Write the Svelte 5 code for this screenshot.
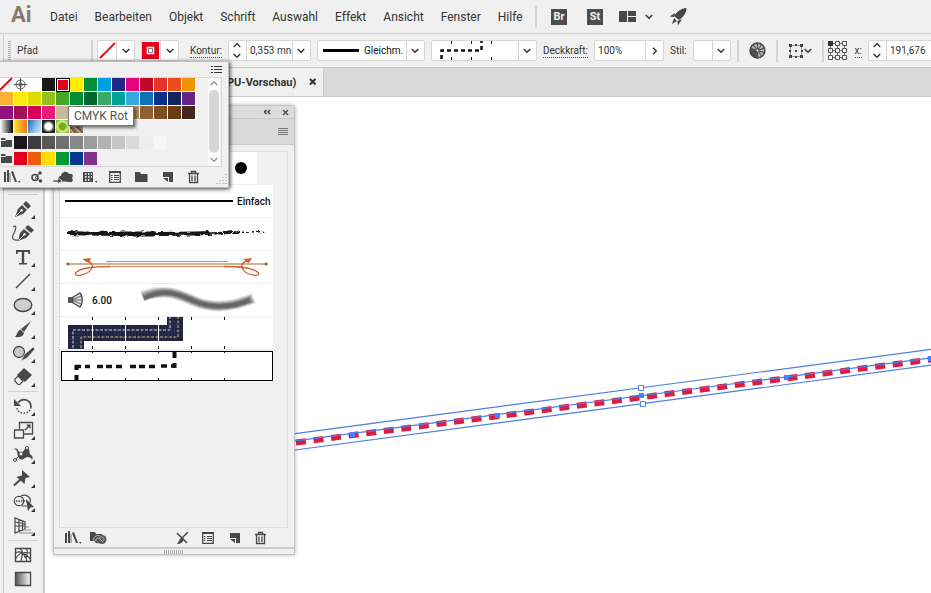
<script>
  const menus = ['Datei', 'Bearbeiten', 'Objekt', 'Schrift', 'Auswahl', 'Effekt', 'Ansicht', 'Fenster', 'Hilfe'];

  const swatchRows = [
    ['none', 'reg', '#ffffff', '#1a1718', '#e2001a', '#ffed00', '#009036', '#009fe3', '#1d2983', '#e6007e', '#be0a26', '#e6332a', '#e94e1b', '#f39200'],
    ['#f9b233', '#fcea10', '#dedc00', '#95c11f', '#46a62a', '#008d36', '#006633', '#3aaa68', '#00a19a', '#38a9dd', '#0f71b8', '#0c2f87', '#14235c', '#662483'],
    ['#92117e', '#a3105a', '#d6005b', '#e71c7b', '#cab89c', '#a39382', '#80725f', '#695c50', '#c7a175', '#b78c57', '#8f6035', '#7d4e24', '#693c11', '#42251b'],
    ['fade', 'sun', 'sky', 'spot', 'leaf', 'grain']
  ];
  const groupRows = [
    ['#1a181b', '#3c3c3f', '#575757', '#6f7070', '#868788', '#9c9d9e', '#b1b2b3', '#c5c6c8', '#d9dadb', '#eeeeee', '#f6f6f6'],
    ['#e2001a', '#ea5b0c', '#ffde00', '#009933', '#003a8c', '#803388']
  ];
  const selected = '#e2001a';

  const penNib = '<path d="M0 16l3-8 4-4 5 5-4 4z" fill="#484848"/><path d="M8 3l3-3 5 5-3 3z" fill="#484848"/><path d="M1 15l5-5" stroke="#eee" stroke-width="1"/><circle cx="6.7" cy="9.3" r="1.2" fill="#eee"/>';

  const drawTools = [
    { label: 'Zeichenstift-Werkzeug', more: true, art: penNib },
    { label: 'Kurvenzeichner', art: '<g transform="translate(3 0)"><path d="M0 16l2-8 4-4 6 5-4 4z" fill="#484848"/><path d="M7 3l3-3 6 5-3 3z" fill="#484848"/><path d="M1 15l5-5" stroke="#eee"/><circle cx="6.500" cy="9.300" r="1.200" fill="#eee"/></g><path d="M-2 2c4-3 3 2 1 6-3 5-1 8 4 7" fill="none" stroke="#555" stroke-width="1.300"/>' },
    { label: 'Text-Werkzeug', more: true, art: '<path d="M1 1h14v4h-1.500L13 3H9.200v11H12v1.500H4V14h2.800V3H3l-.5 2H1z" fill="#484848"/>' },
    { label: 'Liniensegment-Werkzeug', more: true, art: '<path d="M1 15L15 1" stroke="#484848" stroke-width="1.500"/>' },
    { label: 'Ellipse-Werkzeug', more: true, art: '<ellipse cx="8" cy="8" rx="8.800" ry="6.500" fill="#cfcfcf" stroke="#484848" stroke-width="1.400"/>' },
    { label: 'Pinsel-Werkzeug', more: true, art: '<path d="M16 0L6 8l3 3z" fill="#484848"/><path d="M5.500 8.500l3.500 3.500c-1 4-5 4.500-9.500 4 3-1 2-6 6-7.500z" fill="#484848"/>' },
    { label: 'Shaper-Werkzeug', more: true, art: '<circle cx="4" cy="7" r="5.500" fill="#c8c8c8" stroke="#484848" stroke-width="1.300"/><path d="M18 2L9 10l-3 6 6-3 8-9z" fill="#484848" stroke="#eee" stroke-width=".6"/>' },
    { label: 'Radiergummi-Werkzeug', more: true, art: '<path d="M9-1l8 7-7 7-8-7z" fill="#484848"/><path d="M3 7l5 5-3 3.500H3L0 12v-2z" fill="#f5f5f5" stroke="#484848" stroke-width="1.200"/>' }
  ];
  const shapeTools = [
    { label: 'Drehen-Werkzeug', more: true, art: '<path d="M3 4.500C8-1 16 2 16 9" fill="none" stroke="#484848" stroke-width="1.700"/><path d="M-1 1v7h7z" fill="#484848"/><path d="M16 9c-1 8-13 8-14 1" fill="none" stroke="#484848" stroke-width="1.500" stroke-dasharray="1.500 1.500"/>' },
    { label: 'Skalieren-Werkzeug', more: true, art: '<path d="M4.500 7V.5h13V12H9" fill="none" stroke="#484848" stroke-width="1.300"/><path d="M-.5 8h9v8h-9z" fill="none" stroke="#484848" stroke-width="1.300"/><path d="M10 8l4-4" stroke="#484848" stroke-width="1.400"/><path d="M11 2.500h4.500V7z" fill="#484848"/>' },
    { label: 'Breiten-Werkzeug', more: true, art: '<path d="M-1 3c5-2 4 4 7 5 3 0 2-6 6-6 4 0 1 5 4 7 2 1 2 3 1 5-1-3-4-4-7-2-4 3-6 1-7-2C2 7 3 4-1 3z" fill="#484848"/><path d="M0 14L12 2" stroke="#484848"/><circle cx="0" cy="14" r="1.500" fill="#fff" stroke="#484848"/><circle cx="6" cy="8" r="2" fill="#fff" stroke="#484848"/><circle cx="12" cy="2" r="1.500" fill="#fff" stroke="#484848"/>' },
    { label: 'Formgitter-Werkzeug', more: true, art: '<path d="M7 0l8 7-4.500 1-1 6-8-7 5.500-1.500z" fill="#484848"/><path d="M-1 15.500L6 9" stroke="#484848" stroke-width="2"/>' },
    { label: 'Formerstellungs-Werkzeug', more: true, art: '<circle cx="4" cy="7" r="4.700" fill="none" stroke="#484848" stroke-width="1.200"/><path d="M6 2c6-3 12 3 8 8M7 12h5" fill="none" stroke="#484848" stroke-width="1.200"/><path d="M1 7h12" stroke="#484848" stroke-width="1.500" stroke-dasharray="1.500 1"/><path d="M11 5l8 8-3.500.5L13 17z" fill="#484848"/>' },
    { label: 'Perspektivenraster-Werkzeug', more: true, art: '<path d="M0 0v15l10-4V4zM4 1.500v12M7.500 3v9M0 8h10M0 4l10 2" fill="none" stroke="#484848" stroke-width="1.200"/><path d="M11 9h3M8 12h8M4 15h14" stroke="#aaa" stroke-width="1.300"/>' }
  ];
  const fillTools = [
    { label: 'Gitter-Werkzeug', art: '<path d="M.5 1.500h15v13H.5z" fill="#f8f8f8" stroke="#484848" stroke-width="1.400"/><path d="M5 1.500c5 3 1 9 1 13M11 1.500c4 4-2 8 1 13M.5 6c5-3 9 1 10 5M.5 12c4-7 8-7 15-6M9 7c3 0 4 3 6.500 5" fill="none" stroke="#484848" stroke-width="1.200"/>' },
    { label: 'Verlauf-Werkzeug', art: '<defs><linearGradient id="ramp"><stop offset="0" stop-color="#555"/><stop offset="1" stop-color="#fff"/></linearGradient></defs><path d="M.5 1.500h15v13H.5z" fill="url(#ramp)" stroke="#484848" stroke-width="1.400"/>' }
  ];
  const hiddenTool = [
    { label: 'Zauberstab-Werkzeug', art: '<path d="M2 14h3v2H2zM7 13h4v3H7z" fill="#484848"/>' }
  ];

  const library = '<path d="M1 3h2v10H1zM4 1h2v12H4zM8 3l2-1 4 11h-2z" fill="#484848"/><path d="M7 4v9" stroke="#777"/><path d="M15 12h2.500l-1.200 2z" fill="#484848"/>';
  const optionsList = '<path d="M2.700 2.700h10.600v10.600H2.700z" fill="none" stroke="#484848" stroke-width="1.300"/><path d="M2 2h12v2H2zM4 6h1.500v1H4zM7 6h5v1H7zM4 8h1.500v1H4zM7 8h5v1H7zM4 10h1.500v1H4zM7 10h5v1H7z" fill="#484848"/>';
  const newItem = '<path d="M4 3h10v10h-4V8H4z" fill="#484848"/><path d="M4 9h5v4z" fill="#484848"/>';
  const trash = '<path d="M3 4.500h11M6.500 4V2.500h4V4M4.500 5v8.500h8V5M7 6.500v5.500M10 6.500v5.500" fill="none" stroke="#484848" stroke-width="1.300"/>';

  const swatchActions = [
    { label: 'Menü Farbfeldbibliotheken', art: library },
    { label: 'Farbdesigns', art: '<circle cx="6" cy="8.500" r="3" fill="none" stroke="#484848" stroke-width="1.500"/><circle cx="11" cy="4" r="1.700" fill="#484848"/><circle cx="11.500" cy="12" r="1.700" fill="#484848"/><path d="M6 8.500L11 4M6 8.500l5 3.500" stroke="#484848"/>' },
    { label: 'Zur Bibliothek hinzufügen', art: '<path d="M3 12c-1-4 2-5 3-5 0-4 6-6 8-2 5-1 4 3 3 4 2 2 0 5-2 4z" fill="#484848"/><path d="M-2 11h5V8.500L7 12l-4 3v-2h-5z" fill="#484848" stroke="#f0f0f0" stroke-width=".7"/>' },
    { label: 'Farbfeldarten einblenden', art: '<path d="M2 3h10v10H2z" fill="#484848"/><path d="M4 4h1.500v2H4zM7 4h1.500v2H7zM10 4h1v2h-1zM4 7h1.500v2H4zM7 7h1.500v2H7zM10 7h1v2h-1zM4 10h1.500v2H4zM7 10h1.500v2H7z" fill="#ddd"/><path d="M14 12h2.500l-1.200 2z" fill="#484848"/>' },
    { label: 'Farbfeldoptionen', art: optionsList },
    { label: 'Neue Farbgruppe', art: '<path d="M2 3h5l1 2h6.500v8H2z" fill="#484848"/>' },
    { label: 'Neues Farbfeld', art: newItem },
    { label: 'Farbfeld löschen', art: trash }
  ];
  const brushLeft = [
    { label: 'Menü Pinsel-Bibliotheken', art: library },
    { label: 'Bibliotheken', art: '<path d="M0 2h5l1 2h6v7H0z" fill="#484848"/><ellipse cx="8" cy="9.500" rx="4.500" ry="4" fill="#555" stroke="#f0f0f0" stroke-width=".6"/><ellipse cx="12" cy="9.500" rx="4.500" ry="4.500" fill="#555"/><path d="M6 11c-1-3 3-4 5-1l2 2M9 8c3-3 7 1 4 3" fill="none" stroke="#ccc" stroke-width=".8"/>' }
  ];
  const brushRight = [
    { label: 'Pinselkontur entfernen', art: '<path d="M3 3l10 10M14 2L8 8" stroke="#484848" stroke-width="1.500"/><path d="M8 7l2 2c-1 3-3 5-7 5 2-2 2-5 5-7z" fill="#484848"/>' },
    { label: 'Optionen', art: optionsList },
    { label: 'Neuer Pinsel', art: newItem },
    { label: 'Pinsel löschen', art: trash }
  ];

  const ticks = [92, 125, 158, 191, 224];
  const bristle = [0, 1, 2, 3, 4, 5];
  const radial = [0, 36, 72, 108, 144, 180, 216, 252, 288, 324];
  const anchors = [[352, 434], [497, 415], [641, 395], [786, 377], [930, 358]];
</script>

{#snippet chevron()}
  <svg width="8" height="6" viewBox="0 0 8 6"><path d="M.7 1L4 4.300 7.300 1" fill="none" stroke="#333" stroke-width="1.400" /></svg>
{/snippet}

{#snippet spinner(name)}
  <span class="spin">
    <button aria-label="{name} erhöhen"><svg width="8" height="6" viewBox="0 0 8 6"><path d="M.7 5L4 1.700 7.300 5" fill="none" stroke="#333" stroke-width="1.300" /></svg></button>
    <button aria-label="{name} verringern">{@render chevron()}</button>
  </span>
{/snippet}

{#snippet toolList(list)}
  {#each list as tool}
    <button class="tool" aria-label={tool.label}>
      <svg width="16" height="16" viewBox="0 0 16 16">{@html tool.art}</svg>
      {#if tool.more}<svg class="more" width="4" height="4"><path d="M4 0v4H0z" fill="#333" /></svg>{/if}
    </button>
  {/each}
{/snippet}

{#snippet actions(list)}
  {#each list as item}
    <button class="action" aria-label={item.label}><svg width="16" height="16" viewBox="0 0 16 16">{@html item.art}</svg></button>
  {/each}
{/snippet}

{#snippet folder()}
  <svg width="14" height="14"><path d="M1 2h4l1 2h6v7H1z" fill="#484848" /><path d="M1 4.500h5" stroke="#eee" /></svg>
{/snippet}

<div class="app">
  <header class="menubar">
    <strong class="logo">Ai</strong>
    <nav>
      {#each menus as menu}<button>{menu}</button>{/each}
    </nav>
    <span class="rule"></span>
    <div class="launch">
      <button class="badge">Br</button>
      <button class="badge">St</button>
      <button class="arrange" aria-label="Dokumente anordnen">
        <svg width="17" height="12"><path d="M0 0h8v11H0zM9 0h8v5H9zM9 6h8v5H9z" fill="#484848" /></svg>
        {@render chevron()}
      </button>
      <button aria-label="GPU-Leistung">
        <svg width="18" height="18" viewBox="0 0 18 18"><path d="M17.500 0c0 5-3 9-7.500 12L5 8C8 3.500 12 .5 17.500 0zM6 5L.5 8.500 5 9zM13 11l-4 6.500-.5-4.500zM5 10l3 3-5 3z" fill="#484848" /></svg>
      </button>
    </div>
  </header>

  <section class="control">
    <span class="grip"></span>
    <span class="kind">Pfad</span>
    <span class="rule"></span>
    <button class="field combo" aria-label="Fläche">
      <svg width="18" height="19"><path d="M2 17L17 2" stroke="#d90d1c" stroke-width="1.800" /></svg>
      <span class="drop">{@render chevron()}</span>
    </button>
    <button class="field combo" aria-label="Kontur">
      <svg width="18" height="19"><path d="M0 1h17v17H0z" fill="#e2001a" /><path d="M5.500 6.500h6v6h-6z" fill="#fff" stroke="#fff" stroke-width="1.500" /><path d="M6.500 7.500h4v4h-4z" fill="#fff" stroke="#777" /></svg>
      <span class="drop">{@render chevron()}</span>
    </button>
    <label class="caption dotted after" for="weight">Kontur:</label>
    <div class="field">
      {@render spinner('Kontur')}
      <input id="weight" value="0,353 mn" />
      <button class="drop" aria-label="Konturstärke wählen">{@render chevron()}</button>
    </div>
    <div class="field profile">
      <svg width="41" height="19"><path d="M5 9.500h36" stroke="#000" stroke-width="3" /></svg>
      <select aria-label="Variables Breitenprofil"><option>Gleichm.</option></select>
      <span class="drop">{@render chevron()}</span>
    </div>
    <button class="field" aria-label="Pinseldefinition">
      <svg width="86" height="19"><path d="M9.500 18V9.500h40V0" fill="none" stroke="#111" stroke-width="2.500" stroke-dasharray="4 3" /><path d="M19.500 0v3M39.500 0v3M59.500 0v3M19.500 16v3M39.500 16v3M59.500 16v3" stroke="#111" /></svg>
      <span class="drop">{@render chevron()}</span>
    </button>
    <label class="caption dotted" for="opacity">Deckkraft:</label>
    <div class="field">
      <input id="opacity" class="wide" value="100%" />
      <button class="drop" aria-label="Deckkraft wählen"><svg width="6" height="8"><path d="M1 .7L4.300 4 1 7.300" fill="none" stroke="#333" stroke-width="1.400" /></svg></button>
    </div>
    <span class="caption">Stil:</span>
    <button class="field combo" aria-label="Grafikstil"><span class="style"></span><span class="drop">{@render chevron()}</span></button>
    <span class="rule"></span>
    <button class="symbol" aria-label="Bildmaterial neu färben">
      <svg width="17" height="17" viewBox="-8.500 -8.500 17 17"><circle r="7.400" fill="#999" stroke="#444" stroke-width="1.600" />{#each radial as angle, i}<path d="M0 0L0-7A7 7 0 0 1 4.100-5.700Z" transform="rotate({angle})" fill={i > 4 && i < 8 ? '#555' : '#b5b5b5'} stroke="#444" stroke-width=".8" />{/each}<circle r="1.500" fill="#eee" stroke="#555" /></svg>
    </button>
    <span class="rule"></span>
    <button class="symbol" aria-label="Ausrichten">
      <svg width="16" height="16"><path d="M2.500 2.500h11v11h-11z" fill="none" stroke="#999" /><path d="M1 1h3v3H1zM12 1h3v3h-3zM1 12h3v3H1zM12 12h3v3h-3zM7 1h2v2H7zM7 13h2v2H7zM1 7h2v2H1zM13 7h2v2h-2zM7 7h2v2H7z" fill="#444" /></svg>
      {@render chevron()}
    </button>
    <span class="rule"></span>
    <button class="symbol refpoint" aria-label="Bezugspunkt">
      <svg width="19" height="19"><path d="M3 2.500h14M3 9.500h14M3 16.500h14M2.500 3v14M9.500 3v14M16.500 3v14" stroke="#666" /><g fill="#fff" stroke="#555"><path d="M7.500.5h4v4h-4zM14.500.5h4v4h-4zM.5 7.500h4v4h-4zM7.500 7.500h4v4h-4zM14.500 7.500h4v4h-4zM.5 14.500h4v4h-4zM7.500 14.500h4v4h-4zM14.500 14.500h4v4h-4z" /></g><path d="M0 0h5v5H0z" fill="#333" /></svg>
    </button>
    <label class="caption dotted" for="xpos">x:</label>
    <div class="field">
      {@render spinner('X')}
      <input id="xpos" value="191,676" />
    </div>
  </section>

  <div class="tabs">
    <div class="tab">
      <span>PU-Vorschau)</span>
      <button aria-label="Dokument schließen"><svg width="8" height="8"><path d="M1 1l5.500 5.500M6.500 1L1 6.500" stroke="#333" stroke-width="2" /></svg></button>
    </div>
  </div>

  <main>
    <aside class="toolbar">
      {@render toolList(hiddenTool)}
      <hr />
      {@render toolList(drawTools)}
      <hr />
      {@render toolList(shapeTools)}
      <hr />
      {@render toolList(fillTools)}
    </aside>
    <div class="canvas">
      <svg class="art" width="100%" height="100%">
        <g transform="translate(-45 -97)">
          <path d="M296 442.500L940 358.300" stroke="#dc1c40" stroke-width="6" stroke-dasharray="10 7.700" fill="none" />
          <g fill="none" stroke="#4d7fe0" stroke-width="1.200">
            <path d="M280 442.900L940 356.800M280 435.600L940 348.200M280 452L940 364" />
          </g>
          {#each anchors as [x, y]}<rect x={x - 2} y={y - 2} width="5" height="5" fill="#4a80ff" />{/each}
          <path d="M638.500 385.500h5v5h-5zM640.500 401.500h5v5h-5z" fill="#fff" stroke="#4d7fe0" />
        </g>
      </svg>
    </div>
  </main>

  <section class="brushes" aria-label="Pinsel">
    <div class="titlebar">
      <button aria-label="Reduzieren"><svg width="8" height="6"><path d="M3.500 1L1.500 3l2 2M7 1L5 3l2 2" fill="none" stroke="#333" stroke-width="1.400" /></svg></button>
      <button aria-label="Schließen"><svg width="7" height="7"><path d="M1 1l5 5M6 1L1 6" stroke="#555" stroke-width="1.600" /></svg></button>
    </div>
    <div class="paneltabs">
      <button aria-label="Bedienfeldmenü"><svg width="10" height="8"><path d="M0 .5h10M0 2.500h10M0 4.500h10M0 6.500h10" stroke="#777" /></svg></button>
    </div>
    <div class="well">
      <div class="list">
        <div class="row first"><svg width="197" height="33"><circle cx="181" cy="16" r="6" /></svg></div>
        <div class="row basic"><span class="stroke"></span><b>Einfach</b></div>
        <div class="row">
          <svg width="213" height="32" fill="none">
            <defs>
              <filter id="rough" x="0" y="0" width="213" height="32" filterUnits="userSpaceOnUse">
                <feTurbulence type="fractalNoise" baseFrequency=".15 .4" numOctaves="2" seed="4" />
                <feDisplacementMap in="SourceGraphic" scale="4" xChannelSelector="R" yChannelSelector="G" />
              </filter>
            </defs>
            <g filter="url(#rough)" stroke="#141414">
              <path d="M7 15C40 16 60 16 80 16S120 16 150 15" stroke-width="4" />
              <path d="M60 16h35" stroke-width="5" />
              <path d="M148 15.500c10 0 20-1 30-1" stroke-width="2.500" stroke-dasharray="9 1 4 1" />
              <path d="M176 14.500l28-1" stroke-width="1.500" stroke-dasharray="4 2 2 2" />
            </g>
          </svg>
        </div>
        <div class="row">
          <svg width="213" height="32" fill="none">
            <path d="M6 13h202" stroke="#9a682b" stroke-width="1.200" /><circle cx="8" cy="13" r="1.500" fill="#9a682b" /><circle cx="206" cy="13" r="1.500" fill="#9a682b" />
            <path d="M46 10.500h122M50 15.500h115" stroke="#dc8258" />
            <g><path d="M50 15.500c-12 0-29 1-34 6-4 5 11 3 15-3 3-5 0-8-6-9" stroke="#cf6030" stroke-width="1.300" /><path d="M22 8l9-1-2 5z" fill="#cf6030" /></g>
            <g transform="translate(214 0) scale(-1 1)"><path d="M50 15.500c-12 0-29 1-34 6-4 5 11 3 15-3 3-5 0-8-6-9" stroke="#cf6030" stroke-width="1.300" /></g>
            <path d="M183 8l9-1-3 5z" fill="#cf6030" />
          </svg>
        </div>
        <div class="row bristle">
          <svg width="16" height="16" fill="none"><path d="M0 5h6v6H0z" fill="#555" /><path d="M5 5l7-4c3 3 3 11 0 14l-7-4z" fill="#ddd" stroke="#444" stroke-width="1.200" /><path d="M6 7l7-3M6 8h8M6 9l7 3" stroke="#666" /></svg>
          <b>6.00</b>
          <svg width="130" height="32" fill="none">
            {#each bristle as n}<path d="M{8 + n / 2} {12 + n / 2}C31 4 44 10 60 17S96 24 {120 - n} {14 + n / 2}" stroke="#555" stroke-opacity={0.14 + n * 0.07} stroke-width={11 - n * 1.6} />{/each}
          </svg>
        </div>
        <div class="row">
          <svg width="213" height="32" fill="none">
            <path d="M16 32V16H115V0" stroke="#20233f" stroke-width="16" />
            <path d="M16 32V16H115V0" stroke="#363b5c" stroke-width="14" stroke-dasharray="1 2" opacity=".6" />
            <path d="M13 31V13H110V0" stroke="#d6dae6" stroke-dasharray="3 1.500" />
            <path d="M21 31V20H118V0" stroke="#d5b57d" stroke-dasharray="3 1.500" />
            <path d="M32.500 7v18M65.500 7v18M98.500 7v18" stroke="#fff" />
            {#each ticks as t}<path d="M{t - 59.5} 0v3M{t - 59.5} 29v3" stroke="#111" />{/each}
          </svg>
        </div>
        <div class="row picked">
          <svg width="211" height="28" fill="none">
            <path d="M14.500 28v-5M14.500 18v-5" stroke="#111" stroke-width="4" />
            <path d="M13 14.500h6M23 14.500h5M35 14.500h6M44 14.500h6M54 14.500h6M68 14.500h6M77 14.500h6M87 14.500h6M99 14h6M109 14h5" stroke="#111" stroke-width="3.500" />
            <path d="M112.500 0v6M112.500 11v5" stroke="#111" stroke-width="4" />
            {#each ticks as t}<path d="M{t - 61.5} 0v1M{t - 61.5} 26v3" stroke="#111" />{/each}
          </svg>
        </div>
      </div>
    </div>
    <div class="footer">
      {@render actions(brushLeft)}
      <span class="grow"></span>
      {@render actions(brushRight)}
    </div>
    <div class="resize"><span></span></div>
  </section>

  <section class="swatches" aria-label="Farbfelder">
    <div class="swatchhead">
      <button aria-label="Farbfeldmenü"><svg width="11" height="8"><path d="M0 .5h2M3 .5h8M0 3.500h2M3 3.500h8M0 6.500h2M3 6.500h8" stroke="#333" /></svg></button>
    </div>
    <div class="swatchbody">
      <div class="grid">
        {#each swatchRows as row}
          <div class="line">
            {#each row as color}
              {#if color === 'none'}
                <button class="swatch" aria-label="Ohne"><svg width="13" height="13"><path d="M0 12L12 0" stroke="#d90d1c" stroke-width="2" /></svg></button>
              {:else if color === 'reg'}
                <button class="swatch" aria-label="Passermarken"><svg width="13" height="13" fill="none" stroke="#555"><circle cx="6.500" cy="6.500" r="4.500" /><circle cx="6.500" cy="6.500" r="1.800" /><path d="M6.500 0v13M0 6.500h13" /></svg></button>
              {:else if color.startsWith('#')}
                <button class="swatch" class:selected={color === selected} style="background-color: {color}" aria-label={color}></button>
              {:else}
                <button class="swatch {color}" aria-label={color}></button>
              {/if}
            {/each}
          </div>
        {/each}
        {#each groupRows as row}
          <div class="line group">
            {@render folder()}
            {#each row as color}<button class="swatch" style="background-color: {color}" aria-label={color}></button>{/each}
          </div>
        {/each}
      </div>
      <div class="scroll">
        <svg width="8" height="6"><path d="M.7 5L4 1.700 7.300 5" fill="none" stroke="#999" stroke-width="1.400" /></svg>
        <span></span>
        <svg width="8" height="6"><path d="M.7 1L4 4.300 7.300 1" fill="none" stroke="#999" stroke-width="1.400" /></svg>
      </div>
    </div>
    <div class="swatchfoot">
      {@render actions(swatchActions)}
      <svg class="corner" width="11" height="11"><path d="M10 0v11M7 3v8M4 6v5M1 9v2" stroke="#999" stroke-dasharray="1 2" /></svg>
    </div>
    <div class="tooltip" role="tooltip">CMYK Rot</div>
  </section>
</div>

<style>
  :global(body) {
    margin: 0;
  }
  .app {
    position: relative;
    display: flex;
    flex-direction: column;
    min-height: 100vh;
    overflow: hidden;
    background: #f0f0f0;
    color: #333;
    font-family: Roboto, "Open Sans", sans-serif;
    font-size: 12px;
  }
  .app * {
    box-sizing: border-box;
  }
  svg {
    display: block;
    flex: none;
    overflow: visible;
  }
  button {
    display: flex;
    align-items: center;
    justify-content: center;
    margin: 0;
    padding: 0;
    border: 0;
    background: none;
    color: inherit;
    font: inherit;
  }
  .menubar {
    display: flex;
    align-items: center;
    height: 34px;
    padding-left: 11px;
    border-bottom: 1px solid #cfcfcf;
  }
  .logo {
    width: 39px;
    padding-bottom: 4px;
    color: #8b766b;
    font-size: 22px;
    line-height: 24px;
  }
  nav {
    display: flex;
    gap: 17px;
    width: 485px;
  }
  .rule {
    flex: none;
    width: 2px;
    height: 22px;
    background: #d3d3d3;
  }
  .launch {
    display: flex;
    align-items: center;
    gap: 16px;
    padding-left: 14px;
  }
  .badge {
    width: 16px;
    height: 16px;
    margin-right: 4px;
    background: #4d4d4d;
    color: #f0f0f0;
    font-size: 11px;
    font-weight: 700;
  }
  .badge + .arrange {
    margin-left: -4px;
  }
  .arrange {
    gap: 9px;
  }
  .control {
    display: flex;
    align-items: center;
    gap: 6px;
    height: 34px;
    margin-left: 3px;
    padding-left: 4px;
    border-bottom: 1px solid #c9c9c9;
    border-left: 1px solid #cfcfcf;
    font-size: 10px;
  }
  .grip {
    flex: none;
    width: 3px;
    height: 20px;
    background: repeating-linear-gradient(#aaa 0 1px, transparent 1px 2px);
  }
  .kind {
    flex: none;
    width: 68px;
  }
  .kind + .rule {
    margin-right: -2px;
  }
  .field {
    display: flex;
    flex: none;
    align-items: center;
    height: 21px;
    border: 1px solid #d6d6d6;
    border-radius: 2px;
    background: #fff;
  }
  .drop {
    display: flex;
    flex: none;
    align-items: center;
    justify-content: center;
    width: 18px;
    height: 19px;
    border-left: 1px solid #d6d6d6;
  }
  .style {
    width: 18px;
  }
  .caption {
    flex: none;
    line-height: 13px;
  }
  .dotted {
    border-bottom: 1px dotted #555;
  }
  .after {
    margin-left: 5px;
  }
  .spin {
    display: flex;
    flex-direction: column;
    align-items: center;
    gap: 5px;
    width: 17px;
  }
  input {
    width: 46px;
    height: 19px;
    padding: 0 0 0 3px;
    border: 0;
    border-left: 1px solid #d6d6d6;
    background: none;
    color: #333;
    font: inherit;
  }
  .wide {
    width: 50px;
    border-left: 0;
  }
  .profile select {
    width: 47px;
    padding: 0 0 0 5px;
    border: 0;
    appearance: none;
    background: none;
    color: #111;
    font: inherit;
  }
  .symbol {
    flex: none;
    margin: 0 4px;
  }
  .refpoint {
    margin: 0 2px 0 -2px;
  }
  .tabs {
    display: flex;
    height: 29px;
    margin-left: 3px;
    border-bottom: 1px solid #c9c9c9;
    background: #dadada;
  }
  .tab {
    display: flex;
    align-items: center;
    gap: 13px;
    padding: 0 6px 0 224px;
    border-right: 1px solid #c9c9c9;
    background: #f0f0f0;
    font-size: 11px;
    font-weight: 700;
  }
  main {
    display: flex;
    flex: 1;
  }
  .toolbar {
    display: flex;
    flex: none;
    flex-direction: column;
    width: 42px;
    margin-left: 3px;
    padding-top: 71px;
    border-right: 2px solid #cacaca;
    border-left: 1px solid #c4c4c4;
  }
  .tool {
    position: relative;
    width: 38px;
    height: 24px;
  }
  .more {
    position: absolute;
    right: 7px;
    bottom: 2px;
  }
  hr {
    width: 30px;
    height: 1px;
    margin: 2px 4px;
    border: 0;
    background: #d0d0d0;
  }
  .canvas {
    position: relative;
    flex: 1;
    overflow: hidden;
    background: #fff;
  }
  .art {
    position: absolute;
    inset: 0;
  }
  .brushes {
    position: absolute;
    top: 105px;
    left: 53px;
    width: 242px;
    border: 1px solid #c4c4c4;
    border-radius: 3px 3px 0 0;
    background: #f0f0f0;
    box-shadow: 0 0 4px rgba(0, 0, 0, 0.3);
  }
  .titlebar {
    display: flex;
    align-items: center;
    justify-content: flex-end;
    gap: 11px;
    height: 13px;
    padding-right: 5px;
    border-bottom: 1px solid #c9c9c9;
    background: #dcdcdc;
  }
  .paneltabs {
    display: flex;
    justify-content: flex-end;
    height: 26px;
    padding-right: 6px;
    border-bottom: 1px solid #c9c9c9;
    background: #d9d9d9;
  }
  .well {
    height: 377px;
    margin: 6px 6px 0 5px;
    border: 1px solid #dcdcdc;
  }
  .list {
    display: flex;
    flex-direction: column;
    width: 213px;
  }
  .row {
    display: flex;
    align-items: center;
    height: 33px;
    border-bottom: 1px solid #ececec;
    background: #fff;
    color: #111;
    font-size: 10px;
  }
  .row b {
    font-weight: 500;
  }
  .first {
    width: 197px;
  }
  .basic {
    gap: 4px;
    padding-left: 5px;
  }
  .stroke {
    width: 168px;
    height: 2px;
    background: #000;
  }
  .bristle {
    gap: 8px;
    padding-left: 8px;
  }
  .bristle b {
    width: 34px;
  }
  .picked {
    height: 30px;
    margin: 1px 0 0 1px;
    border: 1px solid #000;
  }
  .footer {
    display: flex;
    align-items: center;
    gap: 10px;
    height: 19px;
    padding: 0 26px 0 10px;
  }
  .grow {
    flex: 1;
  }
  .resize {
    display: flex;
    align-items: center;
    justify-content: center;
    height: 7px;
    border-top: 2px solid #cbcbcb;
  }
  .resize span {
    width: 20px;
    height: 4px;
    background: repeating-linear-gradient(90deg, #aaa 0 1px, transparent 1px 2px);
  }
  .swatches {
    position: absolute;
    top: 61px;
    left: 0;
    width: 229px;
    border: 1px solid #bdbdbd;
    border-left: 0;
    background: #f0f0f0;
    box-shadow: 1px 1px 4px rgba(0, 0, 0, 0.8);
  }
  .swatchhead {
    display: flex;
    align-items: center;
    justify-content: flex-end;
    height: 15px;
    padding-right: 6px;
  }
  .swatchbody {
    display: flex;
    justify-content: space-between;
    height: 90px;
    margin-right: 6px;
    border: 1px solid #d6d6d6;
    border-left: 0;
  }
  .line {
    display: flex;
    height: 14px;
  }
  .group {
    margin-top: 2px;
  }
  .swatch {
    width: 14px;
    height: 14px;
    border-right: 1px solid #fff;
    border-bottom: 1px solid #fff;
    background: #fff;
    background-clip: padding-box;
  }
  .group .swatch {
    border-color: #f0f0f0;
  }
  .selected {
    border: 0;
    outline: 1px solid #000;
    outline-offset: -1px;
    box-shadow: inset 0 0 0 2px #fff;
  }
  .fade {
    background: linear-gradient(90deg, #fff, #000);
  }
  .sun {
    background: linear-gradient(90deg, #ffe13a, #ee7410);
  }
  .sky {
    background: linear-gradient(115deg, #1d6cb5, #8ec2ea 60%, #e4e4e4);
  }
  .spot {
    background: radial-gradient(circle, #fff 3px, #bbb 4px, #222 6px);
  }
  .leaf {
    background: radial-gradient(circle, #6cb01c 3px, #d8e88a 5px, #86bd2c 8px);
  }
  .grain {
    background: repeating-linear-gradient(45deg, #9b7960 0 2px, #c5ab97 2px 3px, #7c5b45 3px 5px);
  }
  .scroll {
    display: flex;
    flex-direction: column;
    align-items: center;
    gap: 4px;
    width: 12px;
    margin-right: 1px;
    padding: 2px 0 3px;
    background: #fafafa;
  }
  .scroll span {
    flex: 1;
    width: 10px;
    border-radius: 5px;
    background: #d6d6d6;
  }
  .swatchfoot {
    display: flex;
    align-items: center;
    gap: 10px;
    height: 20px;
    padding-left: 3px;
  }
  .corner {
    margin: 5px 0 0 5px;
  }
  .tooltip {
    position: absolute;
    top: 44px;
    left: 68px;
    padding: 0 5px;
    border: 1px solid #777;
    background: #fff;
    box-shadow: 2px 2px 3px rgba(0, 0, 0, 0.5);
    color: #555;
    line-height: 18px;
  }
</style>
